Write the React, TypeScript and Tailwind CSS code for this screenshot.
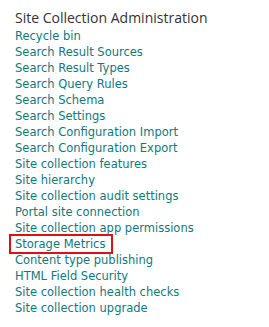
const links = [
    "Recycle bin",
    "Search Result Sources",
    "Search Result Types",
    "Search Query Rules",
    "Search Schema",
    "Search Settings",
    "Search Configuration Import",
    "Search Configuration Export",
    "Site collection features",
    "Site hierarchy",
    "Site collection audit settings",
    "Portal site connection",
    "Site collection app permissions",
    "Storage Metrics",
    "Content type publishing",
    "HTML Field Security",
    "Site collection health checks",
    "Site collection upgrade",
];

const App = () => {
    return (
        <div className="w-[269px] h-[327px] bg-white pl-[15px] pt-[8px]">
            <h2 className="font-['Open_Sans',sans-serif] text-[14px] leading-[19px] text-[#333333] mb-[1px]">
                Site Collection Administration
            </h2>
            <ul className="font-['DejaVu_Sans',Verdana,sans-serif] text-[11.5px] leading-[16px] text-[#0c7a7e]">
                {links.map((link) => (
                    <li key={link}>
                        {link === "Storage Metrics" ? (
                            <a
                                href="#"
                                className="inline-block -ml-[4px] pl-[4px] pr-[6px] outline-2 outline-[#e01010]"
                            >
                                {link}
                            </a>
                        ) : (
                            <a href="#">{link}</a>
                        )}
                    </li>
                ))}
            </ul>
        </div>
    );
};

export default App;
